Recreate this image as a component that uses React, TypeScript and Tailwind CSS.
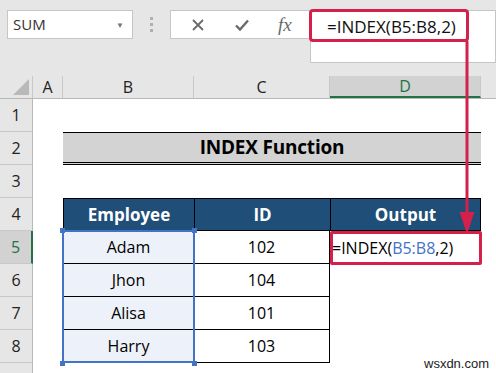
import { Fragment } from 'react';

const cols = [
  { key: 'A', w: 'w-[30px]' },
  { key: 'B', w: 'w-[131px]' },
  { key: 'C', w: 'w-[136px]' },
  { key: 'D', w: 'w-[151px]' },
];

const data = [
  { row: 5, name: 'Adam', id: '102' },
  { row: 6, name: 'Jhon', id: '104' },
  { row: 7, name: 'Alisa', id: '101' },
  { row: 8, name: 'Harry', id: '103' },
];

function RowHead({ n, active }: { n?: number; active?: boolean }) {
  return (
    <div
      className={
        'w-[33px] shrink-0 flex items-center justify-center border-b border-[#c8c8c8] text-[16px] ' +
        (active
          ? 'bg-[#d2d2d2] text-[#217346] border-r-2 border-r-[#217346]'
          : 'bg-[#e6e6e6] text-[#222] border-r border-r-[#b8b8b8]')
      }
    >
      {n}
    </div>
  );
}

export default function App() {
  return (
    <div className="relative w-[496px] h-[373px] overflow-hidden bg-[#e6e6e6] font-['Open_Sans',sans-serif] text-black">
      {/* formula bar */}
      <div className="h-[76px] flex items-start pt-[10px] pl-[7px]">
        <div className="w-[126px] h-[29px] bg-white border border-[#c6c6c6] flex items-center justify-between pl-[5px] pr-[8px]">
          <span className="text-[15px] text-[#333]">SUM</span>
          <span className="text-[8px] text-[#777]">▼</span>
        </div>
        <div className="w-[37px] h-[29px] flex flex-col items-center justify-center gap-[3px]">
          <span className="w-[3px] h-[3px] bg-[#b0b0b0]" />
          <span className="w-[3px] h-[3px] bg-[#b0b0b0]" />
          <span className="w-[3px] h-[3px] bg-[#b0b0b0]" />
        </div>
        <div className="w-[140px] h-[29px] bg-white border border-[#c6c6c6] border-r-0 flex items-center justify-around pl-[6px] pr-[4px]">
          <svg width="14" height="14" viewBox="0 0 14 14">
            <path d="M2 2L12 12M12 2L2 12" stroke="#6a6a6a" strokeWidth="1.8" />
          </svg>
          <svg width="16" height="14" viewBox="0 0 16 14">
            <path d="M2 7.5L6 11.5L14 2.5" stroke="#6a6a6a" strokeWidth="2.4" fill="none" />
          </svg>
          <span className="font-['Liberation_Serif',serif] italic text-[19px] text-[#6a6a6a] leading-none">
            fx
          </span>
        </div>
        <div className="flex-1 h-[53px] bg-white border border-[#c6c6c6] pl-[16px] pt-[2px]">
          <span className="text-[17px] leading-[28px] text-[#111]">=INDEX(B5:B8,2)</span>
        </div>
      </div>

      {/* column headers */}
      <div className="flex h-[23px] bg-[#e6e6e6] border-b border-[#b8b8b8]">
        <div className="w-[33px] shrink-0 flex items-end justify-end pr-[3px] pb-[3px] border-r border-[#c8c8c8]">
          <div className="w-0 h-0 border-l-[16px] border-l-transparent border-b-[16px] border-b-[#b9b9b9]" />
        </div>
        {cols.map((c) => (
          <div
            key={c.key}
            className={
              c.w +
              ' shrink-0 flex items-center justify-center text-[16px] border-r border-[#c8c8c8] ' +
              (c.key === 'D' ? 'bg-[#d2d2d2] text-[#217346] border-b-2 border-b-[#217346]' : 'text-[#222]')
            }
          >
            {c.key}
          </div>
        ))}
        <div className="flex-1" />
      </div>

      {/* row 1 */}
      <div className="flex h-[33px]">
        <RowHead n={1} />
        <div className="flex-1 bg-white" />
      </div>

      {/* row 2 - title */}
      <div className="flex h-[33px]">
        <RowHead n={2} />
        <div className="w-[30px] bg-white" />
        <div className="w-[418px] bg-[#d3d3d3] border-t border-black border-b-[3px] border-b-black border-double flex items-center justify-center">
          <span className="text-[19px] font-bold tracking-[-0.2px]">INDEX Function</span>
        </div>
        <div className="flex-1 bg-white" />
      </div>

      {/* row 3 */}
      <div className="flex h-[33px]">
        <RowHead n={3} />
        <div className="flex-1 bg-white" />
      </div>

      {/* row 4 - headers */}
      <div className="flex h-[33px]">
        <RowHead n={4} />
        <div className="w-[30px] bg-white" />
        <div className="w-[131px] bg-[#1f4e78] border border-black border-r-0 flex items-center justify-center text-white font-bold text-[17px]">
          Employee
        </div>
        <div className="w-[136px] bg-[#1f4e78] border border-black border-r-0 flex items-center justify-center text-white font-bold text-[17px]">
          ID
        </div>
        <div className="w-[151px] bg-[#1f4e78] border border-black flex items-center justify-center text-white font-bold text-[17px]">
          Output
        </div>
        <div className="flex-1 bg-white" />
      </div>

      {/* rows 5-8 */}
      {data.map((d, i) => (
        <Fragment key={d.row}>
          <div className="flex h-[33px]">
            <RowHead n={d.row} active={d.row === 5} />
            <div className="w-[30px] bg-white" />
            <div className="relative w-[131px] bg-[#edf2fa] border-b border-black flex items-center justify-center text-[16px]">
              {d.name}
              {/* selection border */}
              <div
                className={
                  'absolute inset-x-[-1px] top-[-1px] bottom-[-1px] border-[#4472c4] border-x-2 ' +
                  (i === 0 ? 'border-t-2 ' : '') +
                  (i === 3 ? 'border-b-2 ' : '')
                }
              />
            </div>
            <div className="w-[136px] bg-white border-b border-r border-black flex items-center justify-center text-[16px]">
              {d.id}
            </div>
            <div className="w-[151px] bg-white flex items-center pl-[2px] text-[16px]">
              {d.row === 5 && (
                <span>
                  =INDEX(<span className="text-[#4472c4]">B5:B8</span>,2)
                </span>
              )}
            </div>
            <div className="flex-1 bg-white" />
          </div>
        </Fragment>
      ))}

      {/* row 9, only its top shows */}
      <div className="flex h-[33px]">
        <RowHead />
        <div className="flex-1 bg-white" />
      </div>

      {/* selection handles */}
      <div className="absolute left-[60px] top-[228px] w-[5px] h-[5px] bg-[#4472c4]" />
      <div className="absolute left-[192px] top-[228px] w-[5px] h-[5px] bg-[#4472c4]" />
      <div className="absolute left-[60px] top-[361px] w-[5px] h-[5px] bg-[#4472c4]" />
      <div className="absolute left-[192px] top-[361px] w-[5px] h-[5px] bg-[#4472c4]" />

      {/* red highlight boxes + arrow */}
      <div className="absolute left-[309px] top-[9px] w-[160px] h-[33px] border-[3px] border-[#d5204b] rounded-[4px]" />
      <div className="absolute left-[330px] top-[231px] w-[152px] h-[34px] border-[3px] border-[#d5204b] rounded-[2px]" />
      <svg className="absolute left-[458px] top-[41px]" width="20" height="191" viewBox="0 0 20 191">
        <path d="M9 0V176" stroke="#d5204b" strokeWidth="3" />
        <path d="M3 172L9 190L15 172Z" fill="#d5204b" stroke="#d5204b" strokeWidth="2" />
      </svg>

      <div className="absolute left-[424px] top-[354px] text-[13px] text-[#222] font-['Liberation_Sans',sans-serif]">
        wsxdn.com
      </div>
    </div>
  );
}
